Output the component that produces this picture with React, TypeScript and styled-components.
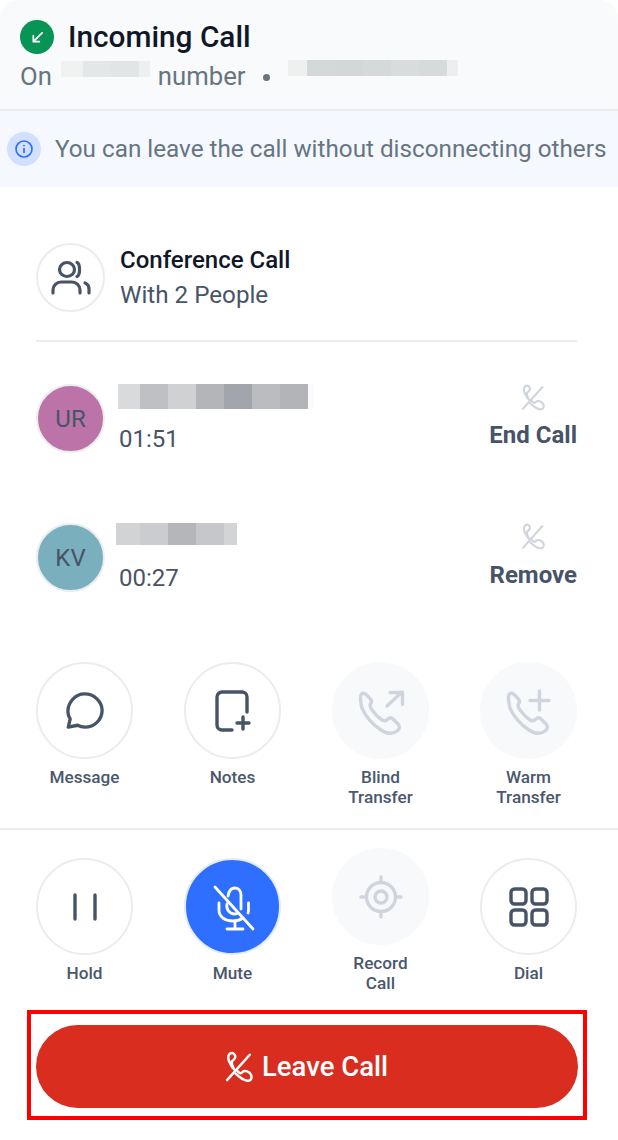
import { ReactNode } from 'react';
import styled, { createGlobalStyle } from 'styled-components';

const GlobalStyle = createGlobalStyle`
  html, body {
    margin: 0;
    padding: 0;
    background: #fff;
    font-family: Roboto, "Liberation Sans", sans-serif;
  }
  * {
    box-sizing: border-box;
  }
`;

const Page = styled.div`
  width: 618px;
  height: 1140px;
  overflow: hidden;
  background: #fff;
`;

const Header = styled.header`
  height: 111px;
  padding: 20px 20px 0;
  background: #f9fafc;
  border-bottom: 2px solid #eaecf0;
  border-radius: 18px 18px 0 0;
`;

const TitleRow = styled.div`
  display: flex;
  align-items: center;
  gap: 14px;
  height: 34px;
`;

const StatusDot = styled.span`
  width: 34px;
  height: 34px;
  border-radius: 50%;
  background: #079455;
  color: #fff;
  display: flex;
  align-items: center;
  justify-content: center;
`;

const Title = styled.h1`
  margin: 0;
  font-size: 29.8px;
  line-height: 34px;
  font-weight: 500;
  color: #101828;
`;

const SubRow = styled.div`
  display: flex;
  align-items: center;
  height: 30px;
  margin-top: 7px;
  font-size: 25.7px;
  color: #667580;
`;

const Dot = styled.span`
  width: 7px;
  height: 7px;
  border-radius: 50%;
  margin: 2px 18px 0 18px;
  background: #667580;
`;

const Blur = styled.span<{ $h: number }>`
  display: inline-flex;
  height: ${(p) => p.$h}px;
`;

const Cell = styled.span<{ $w: number; $c: string }>`
  display: block;
  width: ${(p) => p.$w}px;
  background: ${(p) => p.$c};
`;

const SubBlur = styled(Blur)`
  margin: -14px 8px 0 9px;
`;

const PhoneBlur = styled(Blur)`
  margin-top: -16px;
`;

const Banner = styled.div`
  height: 76px;
  padding-left: 7px;
  display: flex;
  align-items: center;
  gap: 14px;
  background: #f5f8ff;
  font-size: 24.25px;
  color: #667580;
  white-space: nowrap;
`;

const InfoDot = styled.span`
  width: 34px;
  height: 34px;
  border-radius: 50%;
  background: #d1e0ff;
  color: #2e6fff;
  display: flex;
  align-items: center;
  justify-content: center;
  flex-shrink: 0;
`;

const Content = styled.main`
  padding: 56px 41px 0 36px;
`;

const ConferenceRow = styled.div`
  display: flex;
  align-items: flex-start;
  gap: 15px;
  padding-bottom: 27px;
  border-bottom: 2px solid #eaecf0;
`;

const ConferenceIcon = styled.span`
  width: 69px;
  height: 69px;
  border-radius: 50%;
  border: 2px solid #eaecf0;
  color: #475467;
  display: flex;
  align-items: center;
  justify-content: center;
`;

const NameBlock = styled.div`
  display: flex;
  flex-direction: column;
`;

const ConferenceTitle = styled.div`
  font-size: 24px;
  line-height: 34px;
  font-weight: 500;
  color: #101828;
`;

const ConferenceSub = styled.div`
  font-size: 24.2px;
  line-height: 36px;
  color: #475467;
`;

const Participants = styled.div`
  display: flex;
  flex-direction: column;
  gap: 72px;
  padding-top: 42px;
`;

const ParticipantRow = styled.div`
  display: flex;
  align-items: flex-start;
  height: 67px;
`;

const Avatar = styled.span<{ $bg: string }>`
  width: 69px;
  height: 69px;
  border-radius: 50%;
  border: 2px solid #eaecf0;
  background: ${(p) => p.$bg};
  color: #475467;
  font-size: 24px;
  display: flex;
  align-items: center;
  justify-content: center;
  flex-shrink: 0;
`;

const ParticipantInfo = styled.div<{ $left: number }>`
  flex: 1;
  margin-left: ${(p) => p.$left}px;
  display: flex;
  flex-direction: column;
  align-items: flex-start;
`;

const NameSlot = styled.div`
  height: 25px;
`;

const Timer = styled.div<{ $indent: number }>`
  margin-top: 15px;
  margin-left: ${(p) => p.$indent}px;
  font-size: 24px;
  line-height: 30px;
  color: #475467;
`;

const ParticipantAction = styled.div`
  display: flex;
  flex-direction: column;
  align-items: center;
  color: #475467;
  font-size: 24px;
  line-height: 30px;
  font-weight: 700;
`;

const ActionIcon = styled.span<{ $h: number }>`
  display: block;
  height: ${(p) => p.$h}px;
  color: #d0d5dd;
`;

const ActionGrid = styled.div<{ $top: number; $pad: number; $align: string }>`
  display: grid;
  grid-template-columns: repeat(4, 97px);
  justify-content: space-between;
  align-items: ${(p) => p.$align};
  width: 541px;
  margin: ${(p) => p.$top}px 0 0 36px;
  padding-bottom: ${(p) => p.$pad}px;
`;

const Action = styled.div`
  display: flex;
  flex-direction: column;
  align-items: center;
  gap: 8px;
`;

const Round = styled.span<{ $variant: 'outline' | 'muted' | 'active' }>`
  width: 97px;
  height: 97px;
  border-radius: 50%;
  display: flex;
  align-items: center;
  justify-content: center;
  border: 2px solid ${(p) => (p.$variant === 'outline' ? '#eaecf0' : p.$variant === 'muted' ? '#f8f9fb' : '#e4ebfa')};
  background: ${(p) => (p.$variant === 'outline' ? '#fff' : p.$variant === 'muted' ? '#f8f9fb' : '#2e6fff')};
  color: ${(p) => (p.$variant === 'outline' ? '#475467' : p.$variant === 'muted' ? '#d0d5dd' : '#fff')};
`;

const ActionLabel = styled.span`
  font-size: 17.2px;
  line-height: 20px;
  font-weight: 500;
  color: #4a586d;
  text-align: center;
  white-space: pre-line;
`;

const GridDivider = styled.div`
  height: 2px;
  background: #eaecf0;
`;

const Highlight = styled.div`
  width: 560px;
  height: 110px;
  margin: 17px 0 0 27px;
  border: 4px solid #ff0000;
  padding: 11px 5px;
`;

const LeaveButton = styled.button`
  width: 100%;
  height: 83px;
  border: 0;
  border-radius: 42px;
  background: #d92d20;
  color: #fff;
  display: flex;
  align-items: center;
  justify-content: center;
  gap: 9px;
  font-family: inherit;
  font-size: 27.5px;
  font-weight: 500;
`;

const EndCallIcon = ({ width }: { width: number }) => (
  <svg width={width} viewBox="8 3 25 29" fill="none" stroke="currentColor" strokeWidth="2.3" strokeLinecap="round" strokeLinejoin="round" style={{ display: 'block' }}>
    <path d="M9 30 30 6.500" />
    <path d="M16 20.500C14 17.500 13 14.500 13.500 12.500 15.500 11 17 9.500 16.500 7.500 15.500 5 13.500 4 11.500 5.500 9.500 7 9.500 11 12 15c.8 1.400 1.500 2.600 2.300 3.800" />
    <path d="M18 21c1 1 2 2 3 2.500 1.500.5 2-1.500 4-2 3-.5 6 2 6.500 4.500.5 3-1 5-4 4.500-3.500-.5-7.500-3.500-10.500-6.500" />
  </svg>
);

const handsetPath =
  'M9.500 16C9 11 11.500 9.500 14 10.500L19 15.500C21 17.500 21 19 19.500 21 18.500 22.500 19 24 21 27 24 31 28 35 31 37 33.500 38.500 35 38 37 36 38.500 34.500 40 34 42 36L47 41C49 43 49 46 46 48 42 51 36 51 30 47 22 42 14 33 11 25 10 22 9.800 19 9.500 16Z';

const IconMessage = () => (
  <svg width="38" height="38" viewBox="0 0 40 40" fill="none" stroke="currentColor" strokeWidth="3.500" strokeLinejoin="round" strokeLinecap="round">
    <path d="M2.400 37 4.400 28.400C2.800 25.800 2 23 2 20.400 2 11 9.600 2 19.600 2 29.600 2 38 10 38 19.600 38 29.400 29.600 37 20 37c-3 0-5.600-.8-7.800-2z" />
  </svg>
);

const IconNote = () => (
  <svg width="36" height="42" viewBox="0 0 36 42" fill="none" stroke="currentColor" strokeWidth="3.400" strokeLinecap="round" strokeLinejoin="round">
    <path d="M17 40H7a5 5 0 0 1-5-5V7a5 5 0 0 1 5-5h20a5 5 0 0 1 5 5v15" />
    <path d="M28 27v12M22 33h12" />
  </svg>
);

const IconBlind = () => (
  <svg width="60" height="56" viewBox="0 0 60 56" fill="none" stroke="currentColor" strokeWidth="3.400" strokeLinecap="round" strokeLinejoin="round">
    <path d={handsetPath} />
    <path d="M36 23 51 9M39 9.500h12.500V21.500" />
  </svg>
);

const IconWarm = () => (
  <svg width="60" height="56" viewBox="0 0 60 56" fill="none" stroke="currentColor" strokeWidth="3.400" strokeLinecap="round" strokeLinejoin="round">
    <path d={handsetPath} />
    <path d="M40.500 8v19M31 17.500h19" />
  </svg>
);

const IconHold = () => (
  <svg width="24" height="28" viewBox="0 0 24 28" fill="none" stroke="currentColor" strokeWidth="3.400" strokeLinecap="round">
    <path d="M2 2v24M22 2v24" />
  </svg>
);

const IconMicOff = () => (
  <svg width="56" height="56" viewBox="0 0 56 56" fill="none" stroke="currentColor" strokeWidth="2.800" strokeLinecap="round" strokeLinejoin="round">
    <path d="M10 8 48 50" />
    <path d="M23 17C24 11 27 9 30 9 34 9 36 12 36 16V30" />
    <path d="M14 24V31C14 38 20 42 28 42 32 42 35 41 38 39" />
    <path d="M43.500 24V31C43.500 32 43.300 33 43 34" />
    <path d="M22 25C21 30 24 35 30 35 31 35 32 35 33 34" />
    <path d="M30 42V49M22 50H38" />
  </svg>
);

const IconRecord = () => (
  <svg width="44" height="44" viewBox="0 0 44 44" fill="none" stroke="currentColor" strokeWidth="3.400" strokeLinecap="round">
    <circle cx="22" cy="22" r="14.500" />
    <circle cx="22" cy="22" r="6" />
    <path d="M22 2v3M22 39v3M2 22h3M39 22h3" />
  </svg>
);

const IconDial = () => (
  <svg width="40" height="40" viewBox="0 0 40 40" fill="none" stroke="currentColor" strokeWidth="3.400" strokeLinejoin="round">
    <rect x="2" y="2" width="15" height="15" rx="3.500" />
    <rect x="23" y="2" width="15" height="15" rx="3.500" />
    <rect x="2" y="23" width="15" height="15" rx="3.500" />
    <rect x="23" y="23" width="15" height="15" rx="3.500" />
  </svg>
);

const IconGroup = () => (
  <svg width="40" height="36" viewBox="0 0 40 36" fill="none" stroke="currentColor" strokeWidth="3.200" strokeLinecap="round">
    <ellipse cx="16" cy="9.500" rx="7.500" ry="7" />
    <path d="M26 2.500c3.400 1.400 3.400 12.600 0 14" />
    <path d="M2 33v-3c0-4.600 3.600-8 8-8h11c4.400 0 8 3.400 8 8v3" />
    <path d="M34 23c2.400.8 4 3.400 4 6.500V33" />
  </svg>
);

type ActionItem = { label: string; variant: 'outline' | 'muted' | 'active'; icon: ReactNode };

const topActions: ActionItem[] = [
  { label: 'Message', variant: 'outline', icon: <IconMessage /> },
  { label: 'Notes', variant: 'outline', icon: <IconNote /> },
  { label: 'Blind\nTransfer', variant: 'muted', icon: <IconBlind /> },
  { label: 'Warm\nTransfer', variant: 'muted', icon: <IconWarm /> },
];

const bottomActions: ActionItem[] = [
  { label: 'Hold', variant: 'outline', icon: <IconHold /> },
  { label: 'Mute', variant: 'active', icon: <IconMicOff /> },
  { label: 'Record\nCall', variant: 'muted', icon: <IconRecord /> },
  { label: 'Dial', variant: 'outline', icon: <IconDial /> },
];

const lineBlur: [number, string][] = [[22, '#f0f1f1'], [28, '#e4e7e7'], [28, '#e2e5e5'], [11, '#eef0f0']];
const phoneBlur: [number, string][] = [[19, '#eeefef'], [28, '#d3d8d9'], [28, '#d2d7d8'], [28, '#d4d9da'], [28, '#d8dcdc'], [28, '#d5dada'], [11, '#edeeee']];
const nameOne: [number, string][] = [[22, '#d9dadc'], [28, '#bfc0c3'], [28, '#d0d1d3'], [28, '#b4b5b9'], [28, '#a3a5ac'], [28, '#bbbcc0'], [28, '#b3b4b8'], [6, '#fafafa']];
const nameTwo: [number, string][] = [[24, '#d2d3d5'], [28, '#cbccd0'], [28, '#b5b6ba'], [28, '#c6c7ca'], [13, '#d3d4d6']];

const renderCells = (cells: [number, string][]) => cells.map(([w, c], i) => <Cell key={i} $w={w} $c={c} />);

const renderActions = (items: ActionItem[]) =>
  items.map((item) => (
    <Action key={item.label}>
      <Round $variant={item.variant}>{item.icon}</Round>
      <ActionLabel>{item.label}</ActionLabel>
    </Action>
  ));

export default function App() {
  return (
    <Page>
      <GlobalStyle />
      <Header>
        <TitleRow>
          <StatusDot>
            <svg width="13" height="13" viewBox="0 0 14 14" fill="none" stroke="currentColor" strokeWidth="1.800" strokeLinecap="round" strokeLinejoin="round">
              <path d="M12 2 2.500 11.500M2.500 5v6.500H9" />
            </svg>
          </StatusDot>
          <Title>Incoming Call</Title>
        </TitleRow>
        <SubRow>
          On
          <SubBlur $h={16}>{renderCells(lineBlur)}</SubBlur>
          number
          <Dot />
          <PhoneBlur $h={16}>{renderCells(phoneBlur)}</PhoneBlur>
        </SubRow>
      </Header>
      <Banner>
        <InfoDot>
          <svg width="20" height="20" viewBox="0 0 20 20" fill="none" stroke="currentColor" strokeWidth="1.700" strokeLinecap="round">
            <circle cx="10" cy="10" r="8" />
            <path d="M10 9.500v4M10 6.500v.1" />
          </svg>
        </InfoDot>
        You can leave the call without disconnecting others
      </Banner>
      <Content>
        <ConferenceRow>
          <ConferenceIcon>
            <IconGroup />
          </ConferenceIcon>
          <NameBlock>
            <ConferenceTitle>Conference Call</ConferenceTitle>
            <ConferenceSub>With 2 People</ConferenceSub>
          </NameBlock>
        </ConferenceRow>
        <Participants>
          <ParticipantRow>
            <Avatar $bg="#bc73a8">UR</Avatar>
            <ParticipantInfo $left={13}>
              <NameSlot>
                <Blur $h={25}>{renderCells(nameOne)}</Blur>
              </NameSlot>
              <Timer $indent={1}>01:51</Timer>
            </ParticipantInfo>
            <ParticipantAction>
              <ActionIcon $h={36}>
                <EndCallIcon width={23} />
              </ActionIcon>
              End Call
            </ParticipantAction>
          </ParticipantRow>
          <ParticipantRow>
            <Avatar $bg="#7aafbd">KV</Avatar>
            <ParticipantInfo $left={11}>
              <NameSlot>
                <Blur $h={22}>{renderCells(nameTwo)}</Blur>
              </NameSlot>
              <Timer $indent={3}>00:27</Timer>
            </ParticipantInfo>
            <ParticipantAction>
              <ActionIcon $h={37}>
                <EndCallIcon width={23} />
              </ActionIcon>
              Remove
            </ParticipantAction>
          </ParticipantRow>
        </Participants>
      </Content>
      <ActionGrid $top={72} $pad={21} $align="start">
        {renderActions(topActions)}
      </ActionGrid>
      <GridDivider />
      <ActionGrid $top={18} $pad={0} $align="center">
        {renderActions(bottomActions)}
      </ActionGrid>
      <Highlight>
        <LeaveButton>
          <EndCallIcon width={27} />
          Leave Call
        </LeaveButton>
      </Highlight>
    </Page>
  );
}
